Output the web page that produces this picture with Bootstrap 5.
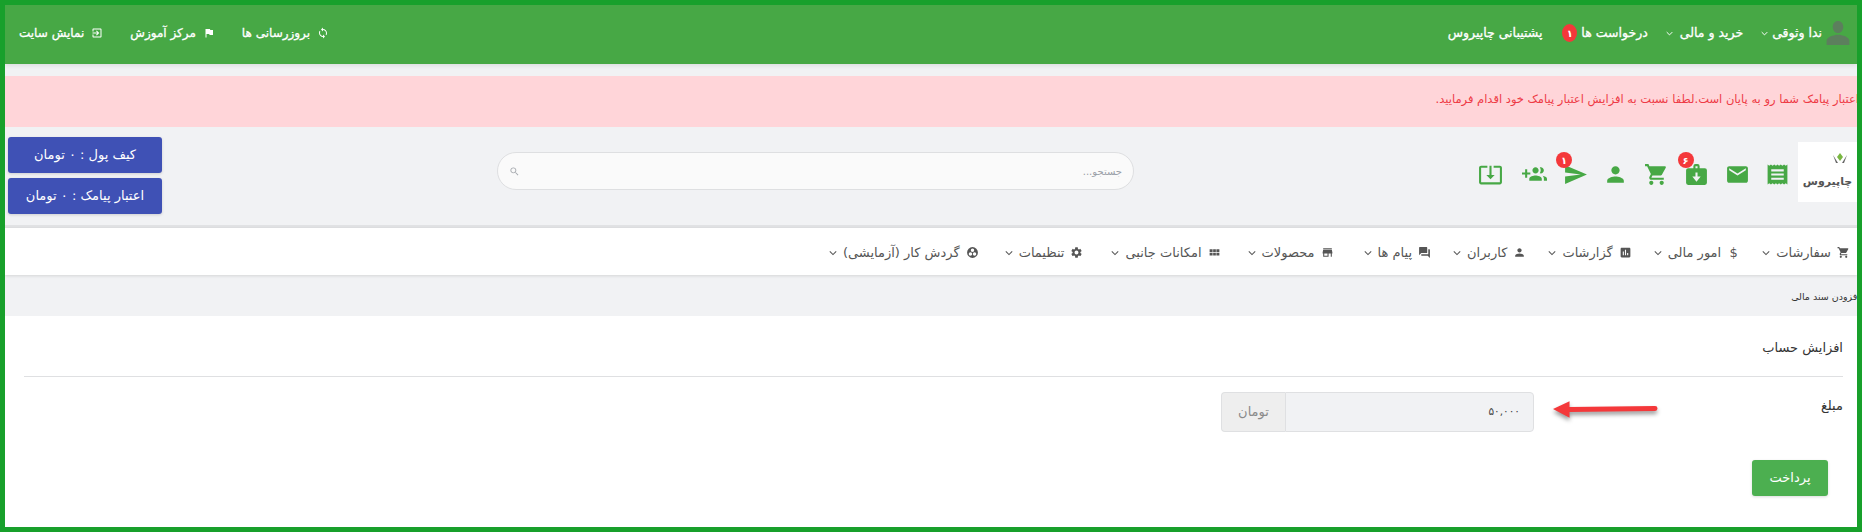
<!doctype html>
<html lang="fa" dir="rtl">
<head>
<meta charset="utf-8">
<title>افزودن سند مالی</title>
<link rel="stylesheet" href="https://cdn.jsdelivr.net/npm/bootstrap@5.3.0/dist/css/bootstrap.min.css">
<style>
html,body{height:100%;}
body{margin:0;background:#fff;font-family:"DejaVu Sans",sans-serif;overflow:hidden;}
.frame{height:532px;border:5px solid #18a02b;background:#f1f2f4;overflow:hidden;position:relative;}
.topbar{height:59px;background:#47a845;color:#fff;font-weight:400;font-size:12px;-webkit-text-stroke:.3px #fff;box-shadow:0 2px 4px rgba(0,0,0,.08);padding:0 0 3px 14px;}
.topbar a{color:#fff;text-decoration:none;display:flex;align-items:center;gap:7px;}
.top-r{gap:20px;padding-right:7px;font-size:12.500px;}
.top-r .user-link{margin-left:-2px;gap:4px;}
.top-r .shop-link{margin-left:-2px;}
.top-r .req-link{gap:4px;}
.top-l{gap:27px;}
.topbar svg{fill:#fff;width:12px;height:12px;}
.topbar svg.avatar{fill:#5c7f5d;width:24px;height:24px;}
.topbar svg.chev{width:7px;height:7px;fill:none;stroke:#fff;stroke-width:1.400;flex:none;}
.pill-red{background:#f4383a;color:#fff;border-radius:50%;display:inline-flex;align-items:center;justify-content:center;font-size:10px;font-weight:700;-webkit-text-stroke:0;}
.top-pill{width:15px;height:18px;}
.sms-alert{height:51px;margin-top:12px;background:#ffd5d9;color:#ee3b46;font-size:11.500px;white-space:nowrap;margin-right:-2px;padding-bottom:3px;}
.head-row{padding:10px 0 0 3px;border-bottom:3px solid #e1e2e4;box-sizing:content-box;height:88px;}
.logo-box{width:59px;height:60px;background:#fff;flex:none;margin-top:5px;position:relative;color:#555;font-weight:700;font-size:11px;overflow:hidden;}
.logo-box svg{position:absolute;top:9px;right:6px;}
.logo-name{margin-top:20px;}
.icons{margin-top:25px;}
.ico-cell{width:40.500px;display:flex;justify-content:center;position:relative;}
.ico-cell:last-child{margin-right:4px;}
.ico-cell svg{fill:#47a845;width:25px;height:25px;}
.ico-pill{position:absolute;top:-10px;width:16px;height:16px;font-size:10px;left:1px;}
.search-wrap{width:637px;height:38px;border:1px solid #dedfe1;border-radius:19px;background:#fafafa;margin-right:336px;margin-top:15px;color:#9aa0a8;font-size:10px;padding:0 11px;}
.search-wrap svg{width:11px;height:11px;fill:#a5a9ae;}
.wallets{width:154px;gap:5px;margin-right:auto;}
.btn-wallet{height:36px;background:#3f51b5;color:#fff;font-size:13px;border-radius:3px;padding:0;border:0;box-shadow:0 1px 3px rgba(0,0,0,.15);}
.btn-wallet:hover{background:#3f51b5;color:#fff;}
.menu-row{height:47px;background:#fff;box-shadow:0 1px 3px rgba(0,0,0,.12);color:#555;font-size:13px;padding-top:2px;position:relative;}
.menu-row a{color:#555;text-decoration:none;display:flex;align-items:center;white-space:nowrap;gap:6px;}
.menu-row .first-item{margin-right:7px;}
.menu-row svg{fill:#555;width:13px;height:13px;flex:none;}
.menu-row svg.chev{width:8px;height:8px;margin-left:22px;stroke:#555;fill:none;stroke-width:1.300;}
.menu-row a:nth-child(5) svg.chev{margin-left:30px;}
.menu-row a:nth-child(6) svg.chev{margin-left:27px;}
.menu-row a:nth-child(7) svg.chev{margin-left:28px;}
.menu-row a:nth-child(8) svg.chev{margin-left:26px;}
.menu-row .dollar{width:13px;text-align:center;}
.crumb{height:41px;font-size:9.500px;color:#333;white-space:nowrap;margin-right:-3px;padding-top:3px;}
.panel{background:#fff;height:211px;}
.panel-title{font-size:13px;color:#333;height:61px;border-bottom:1px solid #dfe0e2;width:1819px;margin:0 14px 0 0;padding-top:24px;font-weight:400;}
.amount-row{margin:15px 14px 0 0;width:1819px;}
.amount-label{font-size:13px;color:#333;padding-top:4px;width:309px;}
.amount-group{width:313px;height:40px;position:relative;}
.amount-input{flex:1;height:40px;background:#f1f2f4;border:1px solid #dfe0e2;border-radius:0 4px 4px 0;color:#444;font-size:10.500px;padding:0 13px;}
.amount-unit{width:64px;height:40px;background:#eeeeee;border:1px solid #dfe0e2;border-right:0;border-radius:4px 0 0 4px;color:#8a8a8a;font-size:13px;}
.red-arrow{position:absolute;right:-124px;top:6px;width:105px;height:22px;filter:drop-shadow(0 3px 2px rgba(0,0,0,.4));}
.pay-btn{width:76px;height:36px;background:#4caf50;color:#fff;font-size:13px;border:0;border-radius:3px;margin-right:29px;margin-top:28px;padding:0;display:block;box-shadow:0 1px 3px rgba(0,0,0,.15);}
.pay-btn:hover{background:#4caf50;color:#fff;}
</style>
</head>
<body>
<div class="frame">
  <nav class="topbar d-flex align-items-center justify-content-between">
    <div class="top-r d-flex align-items-center">
      <a href="#" class="user-link"><svg class="avatar" viewBox="2 2 20 20"><path d="M12 12c2.600 0 4.400-2.200 4.400-5S14.600 2 12 2 7.600 4.200 7.600 7s1.800 5 4.400 5zm0 1.500c-3.400 0-9.500 1.800-9.500 5V22h19v-3.500c0-3.200-6.100-5-9.500-5z"/></svg>ندا وثوقی<svg class="chev" viewBox="0 0 10 10"><path d="M1 3l4 4 4-4"/></svg></a>
      <a href="#" class="shop-link">خرید و مالی<svg class="chev" viewBox="0 0 10 10"><path d="M1 3l4 4 4-4"/></svg></a>
      <a href="#" class="req-link">درخواست ها<span class="pill-red top-pill">۱</span></a>
      <a href="#">پشتیبانی چاپیروس</a>
    </div>
    <div class="top-l d-flex align-items-center">
      <a href="#"><svg viewBox="0 0 24 24"><path d="M12 4V1L8 5l4 4V6c3.310 0 6 2.690 6 6 0 1.010-.250 1.970-.700 2.800l1.460 1.460C19.540 15.030 20 13.570 20 12c0-4.420-3.580-8-8-8zm0 14c-3.310 0-6-2.690-6-6 0-1.010.250-1.970.700-2.800L5.240 7.740C4.460 8.970 4 10.430 4 12c0 4.420 3.580 8 8 8v3l4-4-4-4v3z"/></svg>بروزرسانی ها</a>
      <a href="#"><svg viewBox="0 0 24 24"><path d="M14.400 6L14 4H5v17h2v-7h5.600l.400 2h7V6z"/></svg>مرکز آموزش</a>
      <a href="#"><svg viewBox="0 0 24 24"><path d="M10.090 15.590L11.500 17l5-5-5-5-1.410 1.410L12.670 11H3v2h9.670l-2.580 2.590zM19 3H5c-1.110 0-2 .900-2 2v4h2V5h14v14H5v-4H3v4c0 1.100.890 2 2 2h14c1.100 0 2-.900 2-2V5c0-1.100-.900-2-2-2z"/></svg>نمایش سایت</a>
    </div>
  </nav>

  <div class="sms-alert d-flex align-items-center">اعتبار پیامک شما رو به پایان است.لطفا نسبت به افزایش اعتبار پیامک خود اقدام فرمایید.</div>

  <div class="head-row d-flex align-items-start">
    <div class="logo-box d-flex align-items-center justify-content-center">
      <svg width="22" height="22" viewBox="0 0 22 22"><path fill="#79b742" d="M11 2l3 4-3 4-3-4z"/><path fill="#666" d="M4 4l5 8H7zM18 4l-5 8h2z"/></svg>
      <span class="logo-name">چاپیروس</span>
    </div>
    <div class="icons d-flex align-items-center">
      <div class="ico-cell"><svg viewBox="0 0 24 24"><path d="M2.500 2.500l1.600 1 1.600-1 1.600 1 1.600-1 1.600 1 1.500-1 1.500 1 1.600-1 1.600 1 1.600-1 1.600 1 1.600-1v19l-1.600-1-1.600 1-1.600-1-1.600 1-1.600-1-1.500 1-1.500-1-1.600 1-1.600-1-1.600 1-1.600-1-1.600 1zM6 7v2h12V7zm0 4v2h12v-2zm0 4v2h12v-2z" fill-rule="evenodd"/></svg></div>
      <div class="ico-cell"><svg viewBox="0 0 24 24"><path d="M20 4H4c-1.100 0-1.990.900-1.990 2L2 18c0 1.100.900 2 2 2h16c1.100 0 2-.900 2-2V6c0-1.100-.900-2-2-2zm0 4l-8 5-8-5V6l8 5 8-5v2z"/></svg></div>
      <div class="ico-cell"><svg viewBox="0 0 24 24"><path fill-rule="evenodd" d="M9 6V4a2 2 0 012-2h2a2 2 0 012 2v2h5a2 2 0 012 2v12a2 2 0 01-2 2H4a2 2 0 01-2-2V8a2 2 0 012-2zm2 0h2V4h-2zm0 4v4H8l4 5 4-5h-3v-4z"/></svg><span class="pill-red ico-pill">۶</span></div>
      <div class="ico-cell"><svg viewBox="0 0 24 24"><path d="M7 18c-1.100 0-1.990.900-1.990 2S5.900 22 7 22s2-.900 2-2-.900-2-2-2zM1 2v2h2l3.600 7.590-1.350 2.450c-.160.280-.250.610-.250.960 0 1.100.900 2 2 2h12v-2H7.420c-.140 0-.250-.110-.250-.250l.030-.120.900-1.630h7.450c.750 0 1.410-.410 1.750-1.030l3.580-6.490c.080-.140.120-.310.120-.480 0-.550-.450-1-1-1H5.210l-.940-2H1zm16 16c-1.100 0-1.990.900-1.990 2s.890 2 1.990 2 2-.900 2-2-.900-2-2-2z"/></svg></div>
      <div class="ico-cell"><svg viewBox="0 0 24 24"><path d="M12 12c2.210 0 4-1.790 4-4s-1.790-4-4-4-4 1.790-4 4 1.790 4 4 4zm0 2c-2.670 0-8 1.340-8 4v2h16v-2c0-2.660-5.330-4-8-4z"/></svg></div>
      <div class="ico-cell"><svg viewBox="0 0 24 24"><path d="M2.010 21L23 12 2.010 3 2 10l15 2-15 2z"/></svg><span class="pill-red ico-pill">۱</span></div>
      <div class="ico-cell"><svg viewBox="0 0 24 24"><path d="M8 10H5V7H3v3H0v2h3v3h2v-3h3v-2zm10 1c1.660 0 2.990-1.340 2.990-3S19.660 5 18 5c-.320 0-.630.050-.910.140.570.810.900 1.790.900 2.860s-.340 2.040-.900 2.860c.280.090.590.140.910.140zm-5 0c1.660 0 2.990-1.340 2.990-3S14.660 5 13 5s-3 1.340-3 3 1.340 3 3 3zm6.620 2.160c.830.730 1.380 1.660 1.380 2.840v2h3v-2c0-1.540-2.370-2.490-4.380-2.840zM13 13c-2 0-6 1-6 3v2h12v-2c0-2-4-3-6-3z"/></svg></div>
      <div class="ico-cell"><svg viewBox="0 0 24 24"><path d="M12 16.500l4-4h-3v-9h-2v9H8l4 4zm9-13h-6v1.990h6v14.030H3V5.490h6V3.500H3c-1.100 0-2 .900-2 2v14c0 1.100.900 2 2 2h18c1.100 0 2-.900 2-2v-14c0-1.100-.900-2-2-2z"/></svg></div>
    </div>
    <div class="search-wrap d-flex align-items-center justify-content-between">
      <span>جستجو...</span>
      <svg viewBox="0 0 24 24"><path d="M15.500 14h-.790l-.280-.270C15.410 12.590 16 11.110 16 9.500 16 5.910 13.090 3 9.500 3S3 5.910 3 9.500 5.910 16 9.500 16c1.610 0 3.090-.590 4.230-1.570l.270.280v.790l5 4.990L20.490 19l-4.990-5zm-6 0C7.010 14 5 11.990 5 9.500S7.010 5 9.500 5 14 7.010 14 9.500 11.990 14 9.500 14z"/></svg>
    </div>
    <div class="wallets d-flex flex-column">
      <button class="btn btn-wallet">کیف پول : ۰ تومان</button>
      <button class="btn btn-wallet">اعتبار پیامک : ۰ تومان</button>
    </div>
  </div>

  <div class="menu-row d-flex align-items-center">
    <a href="#" class="first-item"><svg viewBox="0 0 24 24"><path d="M7 18c-1.100 0-1.990.900-1.990 2S5.900 22 7 22s2-.900 2-2-.900-2-2-2zM1 2v2h2l3.600 7.590-1.350 2.450c-.160.280-.250.610-.250.960 0 1.100.900 2 2 2h12v-2H7.420c-.140 0-.250-.110-.250-.250l.030-.120.900-1.630h7.450c.750 0 1.410-.410 1.750-1.030l3.580-6.490c.080-.140.120-.310.120-.480 0-.550-.450-1-1-1H5.210l-.940-2H1zm16 16c-1.100 0-1.990.900-1.990 2s.890 2 1.990 2 2-.900 2-2-.900-2-2-2z"/></svg>سفارشات<svg class="chev" viewBox="0 0 10 10"><path d="M1 3l4 4 4-4"/></svg></a>
    <a href="#"><span class="dollar">$</span>امور مالی<svg class="chev" viewBox="0 0 10 10"><path d="M1 3l4 4 4-4"/></svg></a>
    <a href="#"><svg viewBox="0 0 24 24"><path d="M19 3H5c-1.100 0-2 .900-2 2v14c0 1.100.900 2 2 2h14c1.100 0 2-.900 2-2V5c0-1.100-.900-2-2-2zM9 17H7v-7h2v7zm4 0h-2V7h2v10zm4 0h-2v-4h2v4z"/></svg>گزارشات<svg class="chev" viewBox="0 0 10 10"><path d="M1 3l4 4 4-4"/></svg></a>
    <a href="#"><svg viewBox="0 0 24 24"><path d="M12 12c2.210 0 4-1.790 4-4s-1.790-4-4-4-4 1.790-4 4 1.790 4 4 4zm0 2c-2.670 0-8 1.340-8 4v2h16v-2c0-2.660-5.330-4-8-4z"/></svg>کاربران<svg class="chev" viewBox="0 0 10 10"><path d="M1 3l4 4 4-4"/></svg></a>
    <a href="#"><svg viewBox="0 0 24 24"><path d="M21 6h-2v9H6v2c0 .550.450 1 1 1h11l4 4V7c0-.550-.450-1-1-1zm-4 6V3c0-.550-.450-1-1-1H3c-.550 0-1 .450-1 1v14l4-4h10c.550 0 1-.450 1-1z"/></svg>پیام ها<svg class="chev" viewBox="0 0 10 10"><path d="M1 3l4 4 4-4"/></svg></a>
    <a href="#"><svg viewBox="0 0 24 24"><path d="M20 4H4v2h16V4zm1 10v-2l-1-5H4l-1 5v2h1v6h10v-6h4v6h2v-6h1zm-9 4H6v-4h6v4z"/></svg>محصولات<svg class="chev" viewBox="0 0 10 10"><path d="M1 3l4 4 4-4"/></svg></a>
    <a href="#"><svg viewBox="0 0 24 24"><path d="M3 6h5.500v5H3zM9.500 6h5v5h-5zM15.500 6H21v5h-5.500zM3 12.500h5.500v5H3zM9.500 12.500h5v5h-5zM15.500 12.500H21v5h-5.500z"/></svg>امکانات جانبی<svg class="chev" viewBox="0 0 10 10"><path d="M1 3l4 4 4-4"/></svg></a>
    <a href="#"><svg viewBox="0 0 24 24"><path d="M19.140 12.940c.040-.300.060-.610.060-.940 0-.320-.020-.640-.070-.940l2.030-1.580c.180-.140.230-.410.120-.610l-1.920-3.320c-.120-.220-.370-.290-.590-.220l-2.390.960c-.500-.380-1.030-.700-1.620-.940l-.360-2.540c-.040-.240-.240-.410-.480-.410h-3.840c-.240 0-.430.170-.470.410l-.360 2.540c-.590.240-1.130.570-1.620.940l-2.390-.960c-.220-.080-.470 0-.590.220L2.740 8.870c-.120.210-.080.470.120.610l2.030 1.580c-.050.300-.090.630-.090.940s.020.640.070.940l-2.030 1.580c-.180.140-.230.410-.120.610l1.920 3.320c.120.220.370.290.590.220l2.390-.96c.500.380 1.030.700 1.620.940l.360 2.540c.050.240.240.410.480.410h3.840c.240 0 .440-.170.470-.41l.360-2.540c.590-.240 1.130-.560 1.620-.940l2.390.96c.220.080.470 0 .590-.220l1.920-3.320c.120-.220.070-.470-.120-.610l-2.010-1.580zM12 15.600c-1.980 0-3.600-1.620-3.600-3.600s1.620-3.600 3.600-3.600 3.600 1.620 3.600 3.600-1.620 3.600-3.600 3.600z"/></svg>تنظیمات<svg class="chev" viewBox="0 0 10 10"><path d="M1 3l4 4 4-4"/></svg></a>
    <a href="#"><svg viewBox="0 0 24 24"><path fill-rule="evenodd" d="M12 2a10 10 0 100 20 10 10 0 000-20zm0 2.500a3.200 3.200 0 110 6.400 3.200 3.200 0 010-6.400zm-3.800 7a3.200 3.200 0 110 6.400 3.200 3.200 0 010-6.400zm7.600 0a3.200 3.200 0 110 6.400 3.200 3.200 0 010-6.400z"/></svg>گردش کار (آزمایشی)<svg class="chev" viewBox="0 0 10 10"><path d="M1 3l4 4 4-4"/></svg></a>
  </div>

  <div class="crumb d-flex align-items-center">افزودن سند مالی</div>

  <div class="panel">
    <h2 class="panel-title">افزایش حساب</h2>
    <div class="amount-row d-flex align-items-start">
      <div class="amount-label">مبلغ</div>
      <div class="amount-group d-flex">
        <div class="amount-input d-flex align-items-center">۵۰,۰۰۰</div>
        <div class="amount-unit d-flex align-items-center justify-content-center">تومان</div>
        <svg class="red-arrow" viewBox="0 0 108 22"><path fill="#f4383a" d="M0 11L17 3v6l88-1a2.500 2.500 0 010 5l-88 1v6z"/></svg>
      </div>
    </div>
    <button class="btn pay-btn">پرداخت</button>
  </div>
</div>
</body>
</html>
